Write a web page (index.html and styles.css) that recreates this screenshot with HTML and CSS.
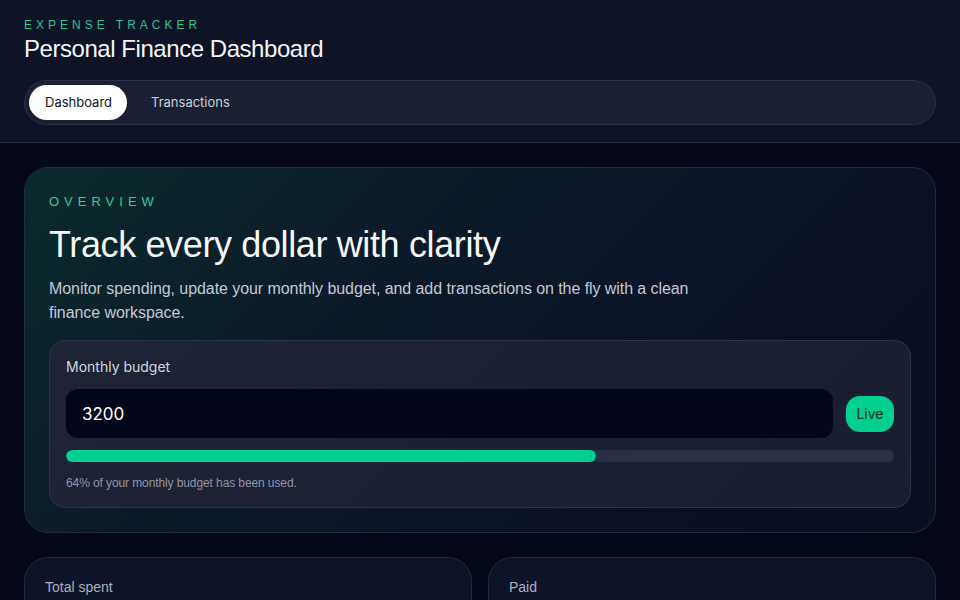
FILE: index.html
```html
<!DOCTYPE html>
<html>
<head>
  <meta charset='utf-8'>
  <title>Personal Finance Dashboard</title>
  <meta name='viewport' content='width=device-width, initial-scale=1'>
  <link rel="stylesheet" href="styles.css">
</head>
<body>
  <header class="topbar">
    <div class="eyebrow">Expense Tracker</div>
    <div class="title">Personal Finance Dashboard</div>

    <nav class="tabs">
      <button class="tab active">Dashboard</button>
      <button class="tab">Transactions</button>
    </nav>
  </header>

  <main class="page">
    <section class="hero">
      <div class="hero-label">Overview</div>
      <h1>Track every dollar with clarity</h1>
      <p class="lead">Monitor spending, update your monthly budget, and add transactions on the fly with a clean finance workspace.</p>

      <div class="budget">
        <div class="budget-label">Monthly budget</div>
        <div class="budget-row">
          <input class="budget-input" type="text" value="3200">
          <span class="badge">Live</span>
        </div>
        <div class="progress"><div class="progress-fill" style="width: 64%"></div></div>
        <div class="hint">64% of your monthly budget has been used.</div>
      </div>
    </section>

    <div class="stats">
      <div class="stat">
        <div class="stat-label">Total spent</div>
      </div>
      <div class="stat">
        <div class="stat-label">Paid</div>
      </div>
    </div>
  </main>
</body>
</html>
```

FILE: styles.css
```css
html, body {
  margin: 0;
}

body {
  background: #040818;
  color: #f1f4f9;
  font-family: Inter, "Liberation Sans", sans-serif;
  min-height: 100vh;
}

.topbar {
  background: #0e1326;
  border-bottom: 1px solid #252b3d;
  padding: 16px 24px 17px;
}

.eyebrow {
  font-family: "Liberation Sans", Arial, sans-serif;
  font-size: 12px;
  line-height: 18px;
  letter-spacing: 4px;
  text-transform: uppercase;
  color: #2cc28b;
}

.title {
  font-family: "Liberation Sans", Arial, sans-serif;
  font-size: 24px;
  line-height: 30px;
  letter-spacing: -0.45px;
  color: #f4f6fa;
}

.tabs {
  margin-top: 16px;
  display: flex;
  gap: 8px;
  padding: 4px;
  background: #1a1f31;
  border: 1px solid #2b3146;
  border-radius: 999px;
}

.tab {
  height: 35px;
  padding: 0 16px 1px;
  border: 0;
  border-radius: 999px;
  background: transparent;
  color: #c9ced9;
  font-family: Inter, sans-serif;
  font-size: 13px;
}

.tab.active {
  width: 98px;
  background: #ffffff;
  color: #111522;
}

.page {
  padding: 24px;
}

.hero {
  padding: 24px;
  border: 1px solid #232c3e;
  border-radius: 24px;
  background: linear-gradient(135deg, #0a2a2c 0%, #0c1a28 35%, #0b1226 70%, #0a0f22 100%);
}

.hero-label {
  font-family: "Liberation Sans", Arial, sans-serif;
  font-size: 13px;
  line-height: 20px;
  letter-spacing: 5px;
  text-transform: uppercase;
  color: #38c995;
}

h1 {
  margin: 11px 0 0;
  font-family: "Liberation Sans", Arial, sans-serif;
  font-size: 36px;
  line-height: 43px;
  font-weight: 400;
  letter-spacing: -0.37px;
  color: #f5f7fb;
}

.lead {
  margin: 11px 0 0;
  max-width: 680px;
  font-family: "Liberation Sans", Arial, sans-serif;
  font-size: 16px;
  line-height: 24px;
  letter-spacing: -0.07px;
  color: #c2c8d4;
}

.budget {
  margin-top: 15px;
  padding: 16px;
  border: 1px solid #2c3346;
  border-radius: 16px;
  background: linear-gradient(135deg, #1e2436 0%, #1a1f31 60%, #181d2f 100%);
}

.budget-label {
  font-size: 14px;
  line-height: 20px;
  color: #d2d6df;
}

.budget-row {
  margin-top: 12px;
  display: flex;
  align-items: center;
  gap: 13px;
}

.budget-input {
  flex: 1;
  height: 49px;
  box-sizing: border-box;
  padding: 0 16px;
  border: 0;
  border-radius: 12px;
  background: #03061a;
  color: #ffffff;
  font-family: Inter, sans-serif;
  font-size: 17px;
  outline: none;
}

.badge {
  display: flex;
  align-items: center;
  justify-content: center;
  width: 48px;
  height: 36px;
  border-radius: 14px;
  background: #00d08f;
  color: #0b2a22;
  font-size: 14px;
}

.progress {
  margin-top: 12px;
  height: 12px;
  border-radius: 999px;
  background: #2a3043;
  overflow: hidden;
}

.progress-fill {
  height: 100%;
  border-radius: 999px;
  background: #00d08f;
}

.hint {
  margin-top: 13px;
  font-family: "Liberation Sans", Arial, sans-serif;
  font-size: 12px;
  line-height: 16px;
  letter-spacing: -0.1px;
  color: #8d95a7;
}

.stats {
  margin-top: 24px;
  display: grid;
  grid-template-columns: 1fr 1fr;
  gap: 16px;
}

.stat {
  padding: 20px;
  height: 80px;
  border: 1px solid #222a3d;
  border-radius: 24px;
  background: #0e1427;
}

.stat-label {
  font-family: "Liberation Sans", Arial, sans-serif;
  font-size: 14px;
  line-height: 18px;
  color: #aab1bf;
}
```
